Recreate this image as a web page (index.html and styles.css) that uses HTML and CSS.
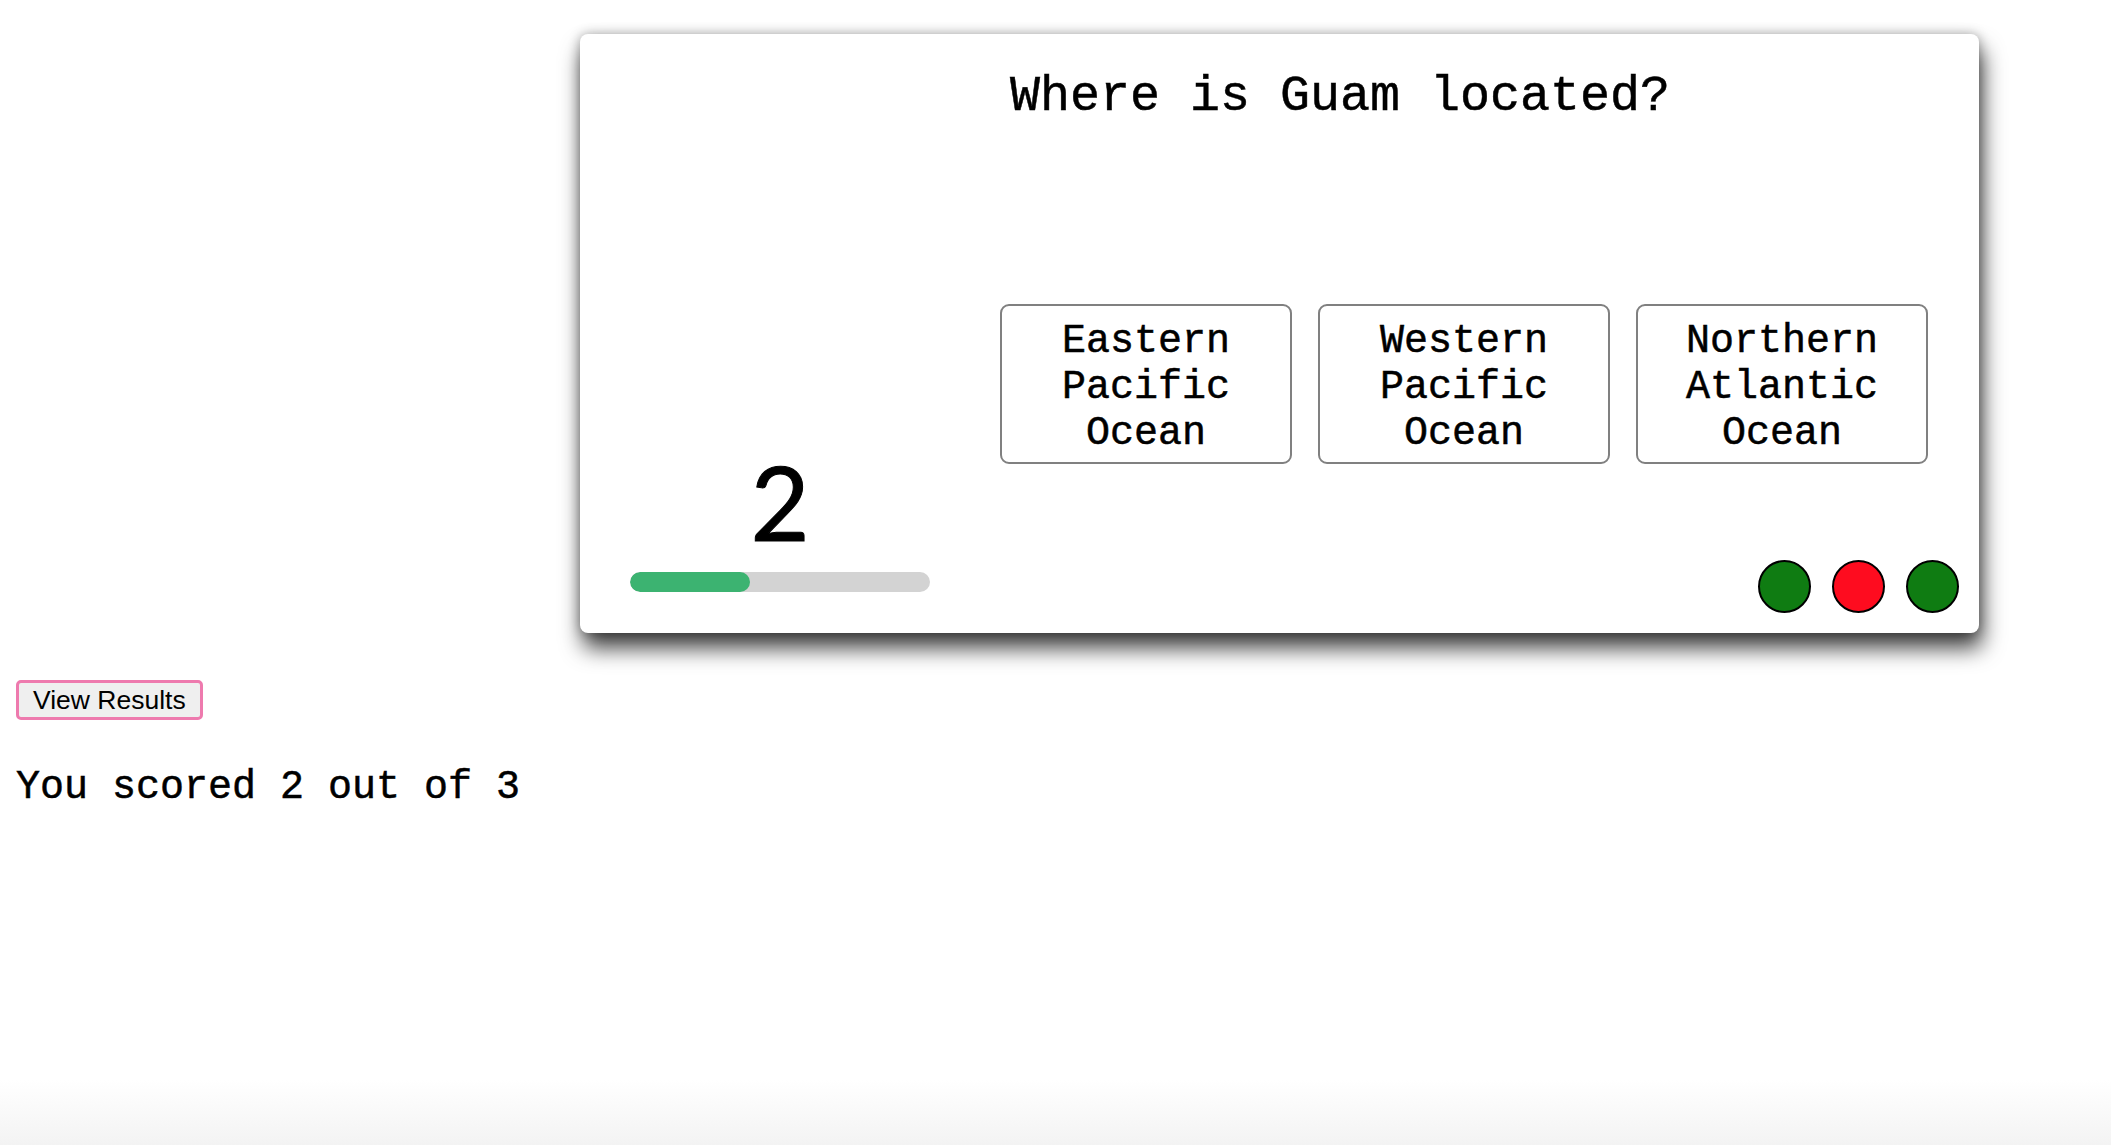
FILE: index.html
```html
<!DOCTYPE html>
<html lang="en">
<head>
<meta charset="utf-8">
<title>Quiz</title>
<link rel="stylesheet" href="styles.css">
</head>
<body>
<main class="page">
  <section class="card">
    <h1 class="question">Where is Guam located?</h1>
    <div class="card-body">
      <div class="timer">
        <div class="count">2</div>
        <div class="bar"><div class="bar-fill" style="width:40%"></div></div>
      </div>
      <div class="play">
        <div class="answers">
          <button class="answer">Eastern Pacific Ocean</button>
          <button class="answer">Western Pacific Ocean</button>
          <button class="answer">Northern Atlantic Ocean</button>
        </div>
        <div class="dots">
          <span class="dot dot-right"></span>
          <span class="dot dot-wrong"></span>
          <span class="dot dot-right"></span>
        </div>
      </div>
    </div>
  </section>
  <button class="results-btn">View Results</button>
  <p class="score">You scored 2 out of 3</p>
</main>
</body>
</html>
```
FILE: styles.css
```css
html, body {
  margin: 0;
  padding: 0;
}
body {
  min-height: 100vh;
  background: linear-gradient(to bottom, #ffffff calc(100% - 65px), #f3f3f3 100%);
  font-family: "Liberation Mono", "Courier New", monospace;
  color: #000;
}
.page {
  padding: 34px 0 0 16px;
}
.card {
  box-sizing: border-box;
  width: 1399px;
  height: 599px;
  margin-left: 564px;
  background: #fff;
  border-radius: 8px;
  box-shadow: 0 0 12px rgba(0,0,0,0.3), 3px 15px 22px rgba(0,0,0,0.75);
  padding: 34px 20px 20px 50px;
  display: flex;
  flex-direction: column;
}
.question {
  margin: 0 0 0 380px;
  font-size: 50px;
  font-weight: normal;
  line-height: 57px;
  white-space: nowrap;
  -webkit-text-stroke: 0.5px #000;
}
.card-body {
  flex: 1;
  display: flex;
}
.timer {
  width: 300px;
  display: flex;
  flex-direction: column;
  justify-content: flex-end;
  align-items: stretch;
  padding-bottom: 21px;
}
.count {
  font-family: Lato, "Open Sans", sans-serif;
  font-size: 102px;
  line-height: 102px;
  text-align: center;
  margin-bottom: 19px;
  -webkit-text-stroke: 1px #000;
}
.bar {
  height: 20px;
  border-radius: 10px;
  background: #d3d3d3;
  overflow: hidden;
}
.bar-fill {
  height: 100%;
  border-radius: 10px;
  background: #3cb371;
}
.play {
  flex: 1;
  margin-left: 70px;
  display: flex;
  flex-direction: column;
  justify-content: space-between;
}
.answers {
  display: flex;
  gap: 26px;
  margin-top: 179px;
}
.answer {
  box-sizing: border-box;
  width: 292px;
  height: 160px;
  background: #fff;
  border: 2px solid #808080;
  border-radius: 9px;
  font-family: "Liberation Mono", "Courier New", monospace;
  font-size: 40px;
  line-height: 46px;
  color: #000;
  padding: 7px 30px 0;
  text-align: center;
  -webkit-text-stroke: 0.5px #000;
}
.dots {
  display: flex;
  justify-content: flex-end;
  gap: 21px;
}
.dot {
  box-sizing: border-box;
  width: 53px;
  height: 53px;
  border-radius: 50%;
  border: 2px solid #000;
}
.dot-right { background: #0f7c12; }
.dot-wrong { background: #fe0c1f; }
.results-btn {
  display: block;
  box-sizing: border-box;
  margin-top: 47px;
  height: 40px;
  padding: 0 14px;
  background: #efefef;
  border: 3px solid #ee7aae;
  border-radius: 5px;
  font-family: "Liberation Sans", Arial, sans-serif;
  font-size: 26.5px;
  color: #000;
}
.score {
  margin: 45px 0 0;
  font-size: 40px;
  line-height: 45px;
  white-space: nowrap;
  -webkit-text-stroke: 0.5px #000;
}
```
